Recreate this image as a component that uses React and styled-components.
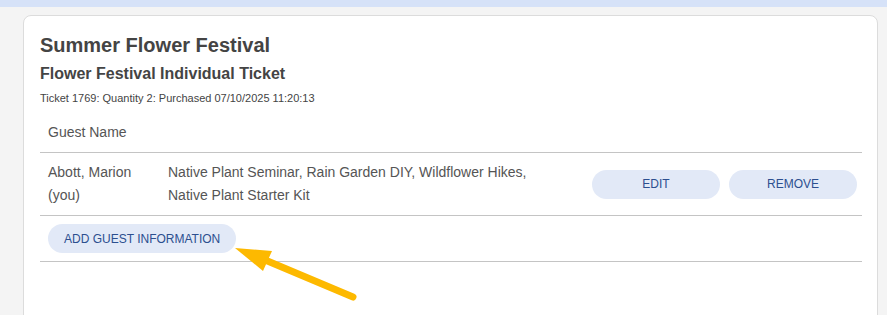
import React from 'react';
import styled, { createGlobalStyle } from 'styled-components';

const GlobalStyle = createGlobalStyle`
  html, body {
    margin: 0;
    padding: 0;
    background: #f4f4f4;
    font-family: "Liberation Sans", Arial, sans-serif;
  }
`;

const Page = styled.div`
  position: relative;
  height: 315px;
  overflow: hidden;
`;

const TopBand = styled.div`
  height: 7px;
  background: #d6e2f8;
`;

const Card = styled.section`
  margin: 8px 9px 0 23px;
  padding: 16px 15px 80px 16px;
  background: #fff;
  border: 1px solid #dcdcdc;
  border-radius: 8px;
`;

const Title = styled.h1`
  margin: 0;
  font-size: 20px;
  line-height: 26px;
  font-weight: bold;
  color: #444;
`;

const Subtitle = styled.h2`
  margin: 6px 0 0;
  font-size: 16px;
  line-height: 20px;
  font-weight: bold;
  color: #444;
`;

const Meta = styled.p`
  margin: 7px 0 0;
  font-size: 11px;
  line-height: 14px;
  color: #444;
`;

const Table = styled.div`
  margin-top: 8px;
  display: flex;
  flex-direction: column;
`;

const Row = styled.div`
  display: grid;
  grid-template-columns: 120px 392px 1fr;
  align-items: center;
  border-bottom: 1px solid #c4c4c4;
`;

const Cell = styled.div`
  padding: 8px;
  font-size: 14px;
  line-height: 23px;
  color: #555;
`;

const Actions = styled.div`
  padding: 8px 5px 8px 8px;
  display: flex;
  justify-content: flex-end;
  gap: 9px;
`;

const PillButton = styled.button`
  height: 29px;
  width: ${({ $wide }) => ($wide ? 'auto' : '128px')};
  padding: 0 16px;
  border: none;
  border-radius: 15px;
  background: #e2e9f7;
  color: #2c4f8f;
  font-family: "Liberation Sans", Arial, sans-serif;
  font-size: 12px;
  text-transform: uppercase;
  cursor: pointer;
`;

const ButtonCell = styled.div`
  padding: 8px;
  grid-column: 1 / -1;
  display: flex;
`;

const Arrow = styled.svg`
  position: absolute;
  left: 0;
  top: 0;
  pointer-events: none;
`;

const App = () => (
  <Page>
    <GlobalStyle />
    <TopBand />
    <Card>
      <Title>Summer Flower Festival</Title>
      <Subtitle>Flower Festival Individual Ticket</Subtitle>
      <Meta>Ticket 1769: Quantity 2: Purchased 07/10/2025 11:20:13</Meta>
      <Table>
        <Row>
          <Cell>Guest Name</Cell>
        </Row>
        <Row>
          <Cell>
            Abott, Marion
            <br />
            (you)
          </Cell>
          <Cell>Native Plant Seminar, Rain Garden DIY, Wildflower Hikes, Native Plant Starter Kit</Cell>
          <Actions>
            <PillButton>Edit</PillButton>
            <PillButton>Remove</PillButton>
          </Actions>
        </Row>
        <Row>
          <ButtonCell>
            <PillButton $wide>Add Guest Information</PillButton>
          </ButtonCell>
        </Row>
      </Table>
    </Card>
    <Arrow width="887" height="315" viewBox="0 0 887 315">
      <line x1="353" y1="297" x2="258" y2="257" stroke="#fdb900" strokeWidth="7" strokeLinecap="round" />
      <polygon points="235,248 272,251 263,271" fill="#fdb900" />
    </Arrow>
  </Page>
);

export default App;
